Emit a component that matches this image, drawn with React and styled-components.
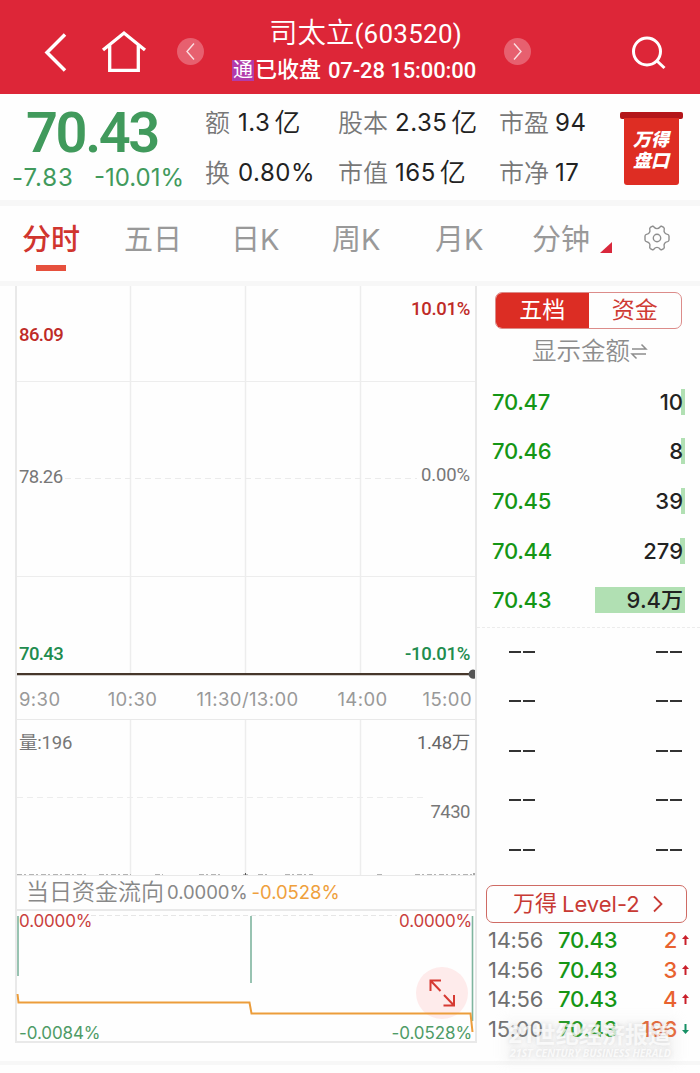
import React from 'react';
import styled, { createGlobalStyle } from 'styled-components';

const ui = '"Inter", "Noto Sans CJK SC", sans-serif';
const din = '"Roboto", "Noto Sans CJK SC", sans-serif';

const GlobalStyle = createGlobalStyle`
  *, *::before, *::after { box-sizing: border-box; }
  body { margin: 0; background: #fefefe; font-family: ${ui}; }
  svg { display: block; flex: none; }
`;

const Screen = styled.div`
  width: 700px;
  height: 1073px;
  overflow: hidden;
  display: flex;
  flex-direction: column;
  background: #fefefe;
  white-space: nowrap;
`;

const Header = styled.header`
  height: 94px;
  flex: none;
  display: flex;
  align-items: flex-start;
  background: #dd2638;
  color: #fff;
  padding-left: 44px;
`;
const HeaderIcon = styled.div`
  margin: ${p => p.$top}px 0 0 ${p => p.$left || 0}px;
`;
const RoundButton = styled.div`
  width: 27px;
  height: 27px;
  border-radius: 50%;
  margin: 38px 0 0 ${p => p.$left}px;
  background: #e7606f;
  display: flex;
  align-items: center;
  justify-content: center;
`;
const Heading = styled.div`
  width: 244px;
  margin-left: 28px;
  padding-top: 16px;
  display: flex;
  flex-direction: column;
  align-items: center;
  font-family: ${din};
`;
const StockName = styled.div`
  font-size: 28.5px;
  line-height: 36px;
  height: 37px;
  font-weight: 350;
  padding-left: 23px;
`;
const StockCode = styled.span`
  font-size: 26px;
  font-weight: 400;
  letter-spacing: 0.25px;
`;
const MarketState = styled.div`
  display: flex;
  align-items: center;
  height: 35px;
  font-size: 22px;
  line-height: 24px;
  font-weight: 500;
`;
const ConnectTag = styled.span`
  width: 22px;
  height: 21px;
  line-height: 20px;
  font-size: 20px;
  text-align: center;
  background: #b23bab;
  margin-right: 1px;
  font-weight: 400;
`;
const StateText = styled.span`
  line-height: 22px;
  margin-top: -1px;
`;
const StateTime = styled.span`
  margin-left: 7px;
  letter-spacing: -0.1px;
`;

const Quote = styled.section`
  height: 112px;
  flex: none;
  display: flex;
  border-bottom: 6px solid #f7f7f7;
`;
const PriceBlock = styled.div`
  width: 205px;
  color: #419a5c;
`;
const LastPrice = styled.div`
  font-family: ${din};
  font-weight: 600;
  font-size: 56px;
  line-height: 56px;
  letter-spacing: -2.4px;
  padding: 11px 0 0 26px;
`;
const Changes = styled.div`
  display: flex;
  justify-content: space-between;
  padding: 2px 21px 0 12px;
  font-size: 24px;
  line-height: 30px;
`;
const Change = styled.span`
  letter-spacing: ${p => p.$spacing || 0}px;
`;
const StatGrid = styled.div`
  width: 407px;
  display: grid;
  grid-template-columns: 133px 161px 113px;
  grid-template-rows: 50px 50px;
  padding-top: 3px;
`;
const Stat = styled.div`
  display: flex;
  align-items: center;
  color: #222;
  font-size: 24px;
  letter-spacing: 0.5px;
`;
const StatLabel = styled.span`
  font-size: 25px;
  line-height: 36px;
  font-weight: 350;
  color: #777;
  letter-spacing: 0;
  margin: 1px ${p => p.$gap}px 0 0;
`;
const Unit = styled.span`
  margin: 1px 0 0 4px;
  font-size: 26px;
  line-height: 36px;
  font-weight: 350;
`;
const Banner = styled.div`
  width: 64px;
  padding-top: 18px;
  margin-left: 7px;
  display: flex;
  flex-direction: column;
  align-items: center;
`;
const BannerRod = styled.div`
  width: 63px;
  height: 7px;
  border-radius: 2px;
  background: #b4161a;
`;
const BannerCloth = styled.div`
  width: 55px;
  height: 67px;
  margin-top: -1px;
  border-radius: 0 0 3px 3px;
  background: #de2d23;
  color: #fff;
  font-size: 18px;
  line-height: 21px;
  font-weight: 900;
  font-style: italic;
  text-align: center;
  padding-top: 11px;
`;

const Tabs = styled.nav`
  height: 80px;
  flex: none;
  display: flex;
  border-bottom: 5px solid #f7f7f7;
  padding-left: 22px;
`;
const Tab = styled.div`
  width: ${p => p.$width}px;
  padding-top: 13px;
  font-size: 29px;
  line-height: 42px;
  font-weight: ${p => (p.$active ? 500 : 400)};
  color: ${p => (p.$active ? '#d0352e' : '#999')};
`;
const TabMark = styled.div`
  width: 30px;
  height: 6px;
  margin: 4px 0 0 14px;
  background: #e6503d;
`;
const TabCorner = styled.svg`
  margin: 36px 32px 0 0;
`;
const SettingsIcon = styled.svg`
  margin-top: 19px;
`;

const Main = styled.main`
  display: flex;
  height: 779px;
  flex: none;
  border-bottom: 4px solid #f7f7f7;
`;
const ChartColumn = styled.section`
  width: 462px;
  height: 757px;
  margin-left: 15px;
  border: solid #e9e9e9;
  border-width: 0 2px 2px 2px;
  display: flex;
  flex-direction: column;
`;
const Pane = styled.div`
  position: relative;
  height: ${p => p.$height}px;
  flex: none;
  font-family: ${p => p.$font || din};
`;
const PaneDrawing = styled.svg`
  position: absolute;
  left: 0;
  top: 0;
  overflow: visible;
`;
const AxisLabel = styled.span`
  position: absolute;
  top: ${p => p.$top}px;
  ${p => (p.$right ? `right: ${p.$size ? 3 : 5}px;` : 'left: 2px;')}
  color: ${p => p.$color};
  font-size: ${p => p.$size || 18.5}px;
  font-weight: ${p => p.$weight || 500};
  line-height: 24px;
  letter-spacing: ${p => (p.$spacing === undefined ? (p.$right ? -0.3 : -0.6) : p.$spacing)}px;
`;
const TimeAxis = styled.div`
  height: 44px;
  flex: none;
  display: grid;
  grid-template-columns: 56px 115px 115px 115px 1fr;
  padding: 0 3px 0 2px;
  line-height: 46px;
  font-size: 18.5px;
  letter-spacing: 0.4px;
  color: #999;
  border-bottom: 1px solid #e9e9e9;
`;
const TimeMark = styled.span`
  text-align: ${p => p.$align || 'center'};
`;
const FlowSummary = styled.div`
  height: 36px;
  flex: none;
  display: flex;
  padding-left: 9px;
  line-height: 33px;
  font-size: 18.5px;
  letter-spacing: -0.05px;
  color: #888;
  border: solid #e9e9e9;
  border-width: 1px 0 2px;
`;
const FlowTitle = styled.span`
  font-size: 23px;
  line-height: 32px;
  font-weight: 350;
  letter-spacing: 0;
  margin-right: 3px;
`;
const FlowRatio = styled.span`
  color: #efa03c;
  margin-left: 4px;
`;
const ExpandButton = styled.div`
  position: absolute;
  right: 7px;
  top: 56px;
  width: 52px;
  height: 52px;
  border-radius: 50%;
  background: #feebeb;
  display: flex;
  align-items: center;
  justify-content: center;
`;

const BookColumn = styled.aside`
  width: 223px;
  display: flex;
  flex-direction: column;
`;
const Segments = styled.div`
  width: 187px;
  height: 37px;
  margin: 6px 0 0 18px;
  border: 1px solid #dc8c8a;
  border-radius: 7px;
  overflow: hidden;
  display: flex;
  flex: none;
`;
const Segment = styled.div`
  flex: 1;
  text-align: center;
  font-size: 23px;
  line-height: 35px;
  color: ${p => (p.$active ? '#fff' : '#cf3b34')};
  background: ${p => (p.$active ? '#dc2d24' : 'transparent')};
`;
const AmountToggle = styled.div`
  height: 48px;
  flex: none;
  display: flex;
  align-items: flex-start;
  padding: 5px 0 0 55px;
  font-size: 24.5px;
  line-height: 35px;
  font-weight: 350;
  color: #8d8d8d;
`;
const AskList = styled.div`
  height: 251px;
  flex: none;
  border-bottom: 1px dashed #ececec;
`;
const BookRow = styled.div`
  height: 49.6px;
  display: flex;
  align-items: center;
  justify-content: space-between;
  padding: 0 15px;
  font-size: 22px;
`;
const BookPrice = styled.span`
  color: #159615;
  font-weight: 500;
  letter-spacing: -0.3px;
`;
const BookVolume = styled.span`
  width: ${p => p.$bar}px;
  height: 26px;
  background: #b1e0b3;
  color: #222;
  font-weight: 500;
  line-height: 26px;
  display: flex;
  justify-content: flex-end;
  padding-right: 2px;
`;
const BidList = styled.div`
  height: 247px;
  flex: none;
  margin-top: -1px;
`;
const BidRow = styled.div`
  height: 49.5px;
  display: flex;
  align-items: center;
  justify-content: space-between;
  padding: 0 18px 0 32px;
`;
const Dashes = styled.span`
  display: flex;
  gap: 2px;
  &::before, &::after {
    content: '';
    width: 12px;
    height: 2px;
    background: #333;
  }
`;
const LevelButton = styled.div`
  width: 201px;
  height: 38px;
  margin: 11px 0 2px 9px;
  flex: none;
  border: 1px solid #cf6b64;
  border-radius: 7px;
  display: flex;
  align-items: center;
  padding-left: 26px;
  color: #c83a34;
  font-size: 22px;
`;
const LevelMaker = styled.span`
  line-height: 30px;
  margin-top: -2px;
`;
const LevelName = styled.span`
  margin-left: 5px;
  width: 91px;
`;
const Trade = styled.div`
  height: 29.8px;
  flex: none;
  display: flex;
  align-items: center;
  padding: 0 11px;
  font-size: 22px;
`;
const TradeTime = styled.span`
  width: 70px;
  color: #707070;
  letter-spacing: -0.3px;
`;
const TradePrice = styled.span`
  color: #159615;
  font-weight: 500;
  letter-spacing: -0.3px;
`;
const TradeSize = styled.span`
  flex: 1;
  text-align: right;
  color: #e8622f;
  font-weight: 500;
  margin-right: 5px;
  letter-spacing: -0.4px;
`;
const Watermark = styled.div`
  position: absolute;
  left: 508px;
  top: 1023px;
  width: 166px;
  color: rgba(255, 255, 255, 0.75);
  background: rgba(205, 205, 205, 0.12);
  box-shadow: 0 0 10px 5px rgba(205, 205, 205, 0.12);
  text-shadow: 0 0 4px rgba(120, 120, 120, 0.25);
`;
const WatermarkName = styled.div`
  font-size: 23px;
  line-height: 25px;
  font-weight: 700;
  letter-spacing: 0.1px;
`;
const WatermarkSub = styled.div`
  font-family: "Open Sans", sans-serif;
  font-size: 10.6px;
  line-height: 11px;
  font-style: italic;
  font-weight: 700;
  letter-spacing: -0.1px;
  padding-left: 2px;
`;

const stats = [
  ['额', '1.3', '亿', 8], ['股本', '2.35', '亿', 7], ['市盈', '94', '', 6],
  ['换', '0.80%', '', 8], ['市值', '165', '亿', 7], ['市净', '17', '', 6],
];
const asks = [['70.47', '10', 4], ['70.46', '8', 4], ['70.45', '39', 4], ['70.44', '279', 5], ['70.43', '9.4万', 90]];
const trades = [['14:56', '2', true], ['14:56', '3', true], ['14:56', '4', true], ['15:00', '196', false]];

const Chevron = ({ flip }) => (
  <svg width="9" height="17" viewBox="0 0 9 17" fill="none" stroke="#fbdfe2" strokeWidth="1.4">
    <path d={flip ? 'M1 .5 8 8.5 1 16.5' : 'M8 .5 1 8.5 8 16.5'} />
  </svg>
);
const TickArrow = ({ up }) => (
  <svg width="7" height="10" viewBox="0 0 7 10" fill={up ? '#c9202b' : '#159064'}>
    <path d={up ? 'M3.5 0 7 4H4.5V10H2.5V4H0Z' : 'M3.5 10 0 6H2.5V0H4.5V6H7Z'} />
  </svg>
);
const Columns = ({ height }) => (
  <path d={`M113.5 0V${height}M228.5 0V${height}M343.5 0V${height}`} stroke="#ededed" strokeWidth="1.5" />
);

export default function App() {
  return (
    <Screen>
      <GlobalStyle />
      <Header>
        <HeaderIcon $top={33}>
          <svg width="24" height="39" viewBox="0 0 24 39" fill="none" stroke="#fff" strokeWidth="3.5">
            <path d="M21 1.5 3 19.5 21 37.5" />
          </svg>
        </HeaderIcon>
        <HeaderIcon $top={30} $left={33}>
          <svg width="46" height="43" viewBox="0 0 46 43" fill="none" stroke="#fff" strokeWidth="3.3">
            <path d="M2 20 23 3 44 20M8.7 15V40.3H37.3V15" />
          </svg>
        </HeaderIcon>
        <RoundButton $left={30}><Chevron /></RoundButton>
        <Heading>
          <StockName>司太立<StockCode>(603520)</StockCode></StockName>
          <MarketState>
            <ConnectTag>通</ConnectTag>
            <StateText>已收盘</StateText>
            <StateTime>07-28 15:00:00</StateTime>
          </MarketState>
        </Heading>
        <RoundButton $left={28}><Chevron flip /></RoundButton>
        <HeaderIcon $top={35} $left={100}>
          <svg width="36" height="36" viewBox="0 0 36 36" fill="none" stroke="#fff" strokeWidth="3">
            <circle cx="16" cy="16.5" r="13.5" />
            <path d="M25.5 25.5 33.5 33" />
          </svg>
        </HeaderIcon>
      </Header>

      <Quote>
        <PriceBlock>
          <LastPrice>70.43</LastPrice>
          <Changes><Change $spacing={0.9}>-7.83</Change><Change>-10.01%</Change></Changes>
        </PriceBlock>
        <StatGrid>
          {stats.map(([label, value, unit, gap]) => (
            <Stat key={label}>
              <StatLabel $gap={gap}>{label}</StatLabel>
              {value}
              {unit && <Unit>{unit}</Unit>}
            </Stat>
          ))}
        </StatGrid>
        <Banner>
          <BannerRod />
          <BannerCloth>万得<br />盘口</BannerCloth>
        </Banner>
      </Quote>

      <Tabs>
        <Tab $width={102} $active>分时<TabMark /></Tab>
        <Tab $width={107}>五日</Tab>
        <Tab $width={101}>日K</Tab>
        <Tab $width={103}>周K</Tab>
        <Tab $width={97}>月K</Tab>
        <Tab $width={68}>分钟</Tab>
        <TabCorner width="12" height="12" viewBox="0 0 12 12"><path d="M12 0V11H0Z" fill="#d9283c" /></TabCorner>
        <SettingsIcon width="26" height="26" viewBox="0 0 26 26" fill="none" stroke="#8e8e8e" strokeWidth="1.4" strokeLinejoin="round">
          <path d="M8.2 1.3Q9.5 1 10.2 2.2Q11.3 3.6 13 3.6T15.8 2.2Q16.5 1 17.8 1.3L19.7 2.4Q20.6 3.2 20.2 4.6Q19.7 6.4 20.6 7.6T23.5 9.4Q24.8 9.7 25 11V15Q24.8 16.3 23.5 16.6Q21.5 17 20.6 18.4T20.2 21.4Q20.6 22.8 19.7 23.6L17.8 24.7Q16.5 25 15.8 23.8Q14.7 22.4 13 22.4T10.2 23.8Q9.5 25 8.2 24.7L6.3 23.6Q5.4 22.8 5.8 21.4Q6.3 19.6 5.4 18.4T2.5 16.6Q1.2 16.3 1 15V11Q1.2 9.7 2.5 9.4Q4.5 9 5.4 7.6T5.8 4.6Q5.4 3.2 6.3 2.4Z" />
          <circle cx="13" cy="13" r="3.7" />
        </SettingsIcon>
      </Tabs>

      <Main>
        <ChartColumn>
          <Pane $height={390}>
            <PaneDrawing width="458" height="390" fill="none">
              <Columns height={387} />
              <path d="M0 95.5H458M0 290.5H458" stroke="#ededed" />
              <path d="M48 192.5H400" stroke="#ebebeb" strokeDasharray="6 4" />
              <path d="M0 388.2H456" stroke="#46372b" strokeWidth="2.2" />
              <path d="M458 384A4.6 4.6 0 1 0 458 392.4Z" fill="#555" />
            </PaneDrawing>
            <AxisLabel $top={37} $color="#bf2b28">86.09</AxisLabel>
            <AxisLabel $top={11} $right $color="#bf2b28">10.01%</AxisLabel>
            <AxisLabel $top={179} $color="#777" $weight={400}>78.26</AxisLabel>
            <AxisLabel $top={177} $right $color="#777" $weight={400} $spacing={-0.1}>0.00%</AxisLabel>
            <AxisLabel $top={356} $color="#218c4e">70.43</AxisLabel>
            <AxisLabel $top={356} $right $color="#218c4e">-10.01%</AxisLabel>
          </Pane>
          <TimeAxis>
            <TimeMark $align="left">9:30</TimeMark>
            <TimeMark>10:30</TimeMark>
            <TimeMark>11:30/13:00</TimeMark>
            <TimeMark>14:00</TimeMark>
            <TimeMark $align="right">15:00</TimeMark>
          </TimeAxis>
          <Pane $height={155}>
            <PaneDrawing width="458" height="155" fill="none">
              <Columns height={155} />
              <path d="M0 77.5H410" stroke="#ededed" strokeDasharray="6 4" />
              <path d="M0 154.5H70M82 154.5H114M138 154.5H146M182 154.5H204M226 154.5H231M241 154.5H252M268 154.5H296M360 154.5H365M398 154.5H458" stroke="#b4b4b4" strokeDasharray="5 2 2 3" />
              <path d="M228.5 153V155M457 153V155" stroke="#555" />
            </PaneDrawing>
            <AxisLabel $top={11} $color="#777" $weight={400} $spacing={-0.2}>量:196</AxisLabel>
            <AxisLabel $top={11} $right $color="#666" $weight={400}>1.48万</AxisLabel>
            <AxisLabel $top={80} $right $color="#777" $weight={400} $spacing={-0.5}>7430</AxisLabel>
          </Pane>
          <FlowSummary>
            <FlowTitle>当日资金流向</FlowTitle>
            <span>0.0000%</span>
            <FlowRatio>-0.0528%</FlowRatio>
          </FlowSummary>
          <Pane $height={130} $font={ui}>
            <ExpandButton>
              <svg width="26" height="28" viewBox="0 0 26 28" fill="none" stroke="#d63a33" strokeWidth="2">
                <path d="M1.5 12V1.5H12M1.5 1.5 11.5 12M25 16V26.5H14.5M15 16 25 26.5" />
              </svg>
            </ExpandButton>
            <PaneDrawing width="458" height="130" fill="none">
              <path d="M74 4.5H380" stroke="#e6e6e6" strokeDasharray="5 3" />
              <path d="M1 5V65M234 5V72M455.5 5V110" stroke="#7fb59f" strokeWidth="1.6" />
              <path d="M.5 83 1.5 91.5H232.5L234.5 102.5H453.5L455.5 121" stroke="#ec9d3b" strokeWidth="2" />
            </PaneDrawing>
            <AxisLabel $top={-2} $color="#c9403d" $size={17} $weight={400} $spacing={-0.15}>0.0000%</AxisLabel>
            <AxisLabel $top={-2} $right $color="#c9403d" $size={17} $weight={400} $spacing={-0.2}>0.0000%</AxisLabel>
            <AxisLabel $top={110} $color="#4e9b66" $size={17} $weight={400} $spacing={-0.1}>-0.0084%</AxisLabel>
            <AxisLabel $top={110} $right $color="#4e9b66" $size={17} $weight={400} $spacing={-0.1}>-0.0528%</AxisLabel>
          </Pane>
        </ChartColumn>

        <BookColumn>
          <Segments>
            <Segment $active>五档</Segment>
            <Segment>资金</Segment>
          </Segments>
          <AmountToggle>
            显示金额
            <svg width="18" height="35" viewBox="0 0 18 35" fill="none" stroke="#8d8d8d" strokeWidth="1.5">
              <path d="M2 15H16L11.5 10.5M16 20H2L6.5 24.5" />
            </svg>
          </AmountToggle>
          <AskList>
            {asks.map(([price, volume, bar]) => (
              <BookRow key={price}>
                <BookPrice>{price}</BookPrice>
                <BookVolume $bar={bar}>{volume}</BookVolume>
              </BookRow>
            ))}
          </AskList>
          <BidList>
            {[1, 2, 3, 4, 5].map(level => (
              <BidRow key={level}><Dashes /><Dashes /></BidRow>
            ))}
          </BidList>
          <LevelButton>
            <LevelMaker>万得</LevelMaker>
            <LevelName>Level-2</LevelName>
            <svg width="10" height="18" viewBox="0 0 10 18" fill="none" stroke="#c83a34" strokeWidth="1.8">
              <path d="M1 1.5 8.5 9 1 16.5" />
            </svg>
          </LevelButton>
          {trades.map(([time, size, up]) => (
            <Trade key={size}>
              <TradeTime>{time}</TradeTime>
              <TradePrice>70.43</TradePrice>
              <TradeSize>{size}</TradeSize>
              <TickArrow up={up} />
            </Trade>
          ))}
        </BookColumn>
      </Main>
      <Watermark>
        <WatermarkName>21世纪经济报道</WatermarkName>
        <WatermarkSub>21ST CENTURY BUSINESS HERALD</WatermarkSub>
      </Watermark>
    </Screen>
  );
}
